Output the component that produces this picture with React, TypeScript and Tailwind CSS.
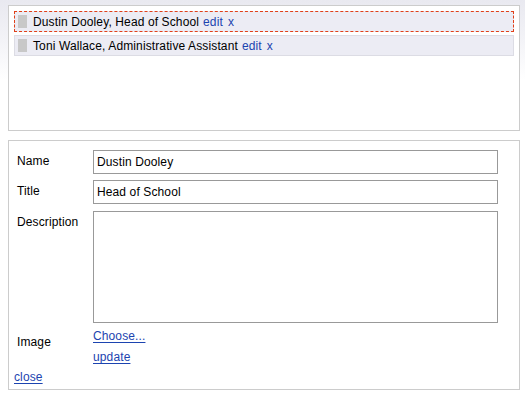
const people = [
  { name: "Dustin Dooley", title: "Head of School", active: true },
  { name: "Toni Wallace", title: "Administrative Assistant", active: false },
];

const font = "font-['Liberation_Sans',Arial,sans-serif]";

export default function App() {
  return (
    <div
      className={`h-[395px] w-[525px] bg-[linear-gradient(to_bottom,#e9e9f0_0px,#f3f3f7_40px,#ffffff_80px)] pt-[5px] pl-[8px] text-[12px] leading-[16px] tracking-[0.12px] text-black ${font}`}
    >
      {/* list of people */}
      <div className="flex h-[126px] w-[512px] flex-col gap-[3px] border border-[#cccccc] bg-white p-[5px]">
        {people.map((p) => (
          <div
            key={p.name}
            className={`flex h-[21px] items-center border bg-[#ececf4] pl-[3px] ${
              p.active ? "border-dashed border-[#e0401a]" : "border-solid border-[#dcdce4]"
            }`}
          >
            <span className="mr-[6px] h-[13px] w-[9px] bg-[#c8c8c8]" />
            <span>
              {p.name}, {p.title}
            </span>
            <a className="ml-[4px] text-[#1c44b0]">edit</a>
            <a className="ml-[5px] text-[#1c44b0]">x</a>
          </div>
        ))}
      </div>

      {/* edit form */}
      <div className="mt-[9px] flex h-[250px] w-[512px] flex-col border border-[#cccccc] bg-white px-[8px] pt-[9px]">
        <div className="flex">
          <label className="w-[76px] pt-[3px]">Name</label>
          <input
            className={`h-[24px] w-[405px] border border-[#999999] px-[3px] text-[12px] tracking-[0.12px] outline-none ${font}`}
            defaultValue="Dustin Dooley"
          />
        </div>
        <div className="mt-[6px] flex">
          <label className="w-[76px] pt-[3px]">Title</label>
          <input
            className={`h-[24px] w-[405px] border border-[#999999] px-[3px] text-[12px] tracking-[0.12px] outline-none ${font}`}
            defaultValue="Head of School"
          />
        </div>
        <div className="mt-[7px] flex">
          <label className="w-[76px] pt-[3px]">Description</label>
          <textarea
            className={`h-[112px] w-[405px] resize-none border border-[#999999] px-[3px] text-[12px] outline-none ${font}`}
          />
        </div>
        <div className="mt-[5px] flex">
          <label className="w-[76px] pt-[6px]">Image</label>
          <div className="flex flex-col items-start">
            <a className="text-[#1c44b0] underline underline-offset-2">Choose...</a>
            <a className="mt-[5px] text-[#1c44b0] underline underline-offset-2">update</a>
          </div>
        </div>
        <a className="-ml-[3px] mt-[4px] self-start text-[#1c44b0] underline underline-offset-2">close</a>
      </div>
    </div>
  );
}
